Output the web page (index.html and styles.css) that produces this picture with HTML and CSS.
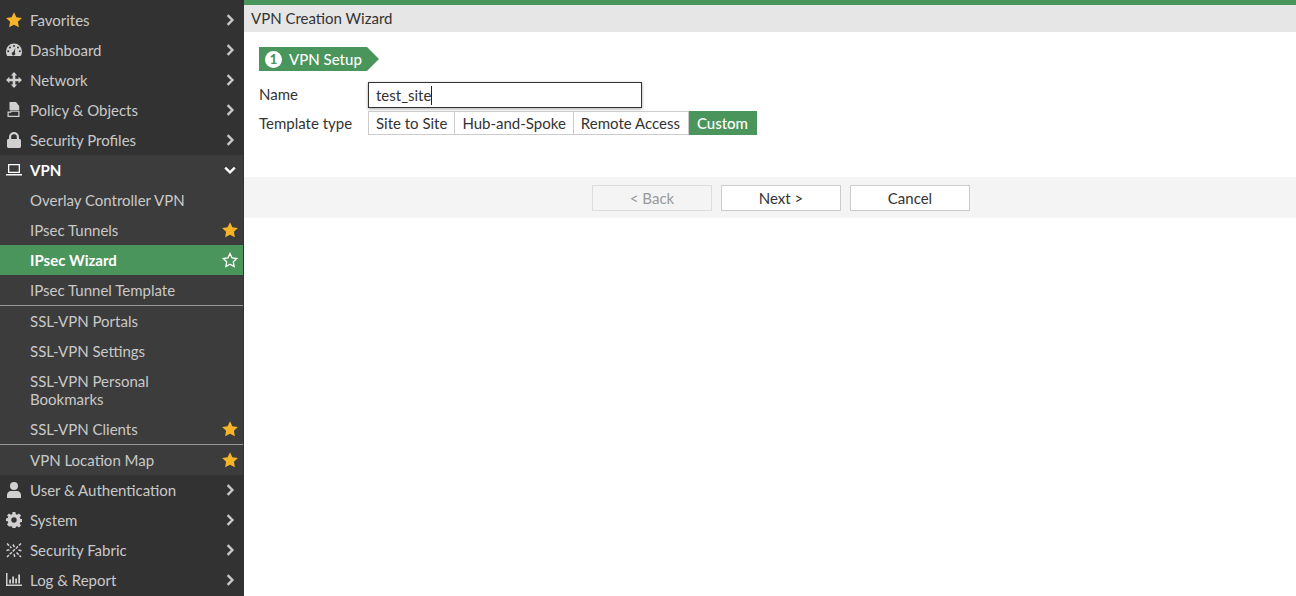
FILE: index.html
```html
<!DOCTYPE html>
<html lang="en">
<head>
<meta charset="utf-8">
<title>VPN Creation Wizard</title>
<link rel="stylesheet" href="styles.css">
</head>
<body>
<svg class="defs" width="0" height="0" aria-hidden="true">
  <defs>
    <symbol id="star" viewBox="0 0 16 16"><path d="M8 .2l2.400 5 5.500.8-4 3.800 1 5.500L8 12.700l-4.900 2.600 1-5.500-4-3.800 5.500-.8z"/></symbol>
    <symbol id="chev" viewBox="0 0 10 12"><path d="M2.600 1.200L7.400 6l-4.800 4.800" fill="none" stroke="currentColor" stroke-width="2.400"/></symbol>
  </defs>
</svg>
<div class="app">
  <nav class="side">
    <div class="item">
      <svg class="ico gold" viewBox="0 0 16 16"><use href="#star"/></svg><span class="lbl">Favorites</span>
      <svg class="chev" viewBox="0 0 10 12"><use href="#chev"/></svg>
    </div>
    <div class="item">
      <svg class="ico" viewBox="0 0 16 16"><path fill-rule="evenodd" d="M8 1.500a8 8 0 0 1 8 8c0 1.900-.5 3.400-1.300 4.500H1.300C.5 12.900 0 11.400 0 9.500a8 8 0 0 1 8-8zM8 3a1 1 0 1 0 0 2 1 1 0 0 0 0-2zM4 4.600a1 1 0 1 0 0 2 1 1 0 0 0 0-2zm8 0a1 1 0 1 0 0 2 1 1 0 0 0 0-2zM2.200 8.300a1 1 0 1 0 0 2 1 1 0 0 0 0-2zm11.600 0a1 1 0 1 0 0 2 1 1 0 0 0 0-2zM9.400 6L7.200 10a1.700 1.700 0 1 0 1.600.6z"/></svg><span class="lbl">Dashboard</span>
      <svg class="chev" viewBox="0 0 10 12"><use href="#chev"/></svg>
    </div>
    <div class="item">
      <svg class="ico" viewBox="0 0 16 16"><path d="M8 0l3.200 3.400H9.300v3.300h3.300V4.800L16 8l-3.400 3.200V9.300H9.300v3.300h1.900L8 16l-3.200-3.400h1.900V9.300H3.400v1.900L0 8l3.400-3.200v1.900h3.300V3.400H4.800z"/></svg><span class="lbl">Network</span>
      <svg class="chev" viewBox="0 0 10 12"><use href="#chev"/></svg>
    </div>
    <div class="item">
      <svg class="ico" viewBox="0 0 16 16"><path d="M3.500 0h6.500l3.200 4v4H3.500z"/><path d="M1.500 9.500h2.800v-1h8.200c.7 0 1 .4 1 1v5.500h-12zm1.200 1.200v3.100h9.600v-4h-7v.9z"/></svg><span class="lbl">Policy &amp; Objects</span>
      <svg class="chev" viewBox="0 0 10 12"><use href="#chev"/></svg>
    </div>
    <div class="item">
      <svg class="ico" viewBox="0 0 16 16"><path fill-rule="evenodd" d="M8 0a5 5 0 0 1 5 5v2h.5c.8 0 1.500.6 1.500 1.400v6.200c0 .8-.7 1.400-1.500 1.400h-11C1.700 16 1 15.400 1 14.600V8.400C1 7.600 1.700 7 2.500 7H3V5a5 5 0 0 1 5-5zm0 2.200A2.800 2.800 0 0 0 5.200 5v2h5.600V5A2.800 2.800 0 0 0 8 2.200z"/></svg><span class="lbl">Security Profiles</span>
      <svg class="chev" viewBox="0 0 10 12"><use href="#chev"/></svg>
    </div>

    <div class="group">
      <div class="item open">
        <svg class="ico" viewBox="0 0 16 16"><path fill-rule="evenodd" d="M2 2h12v9H2zm1.300 1.300v6.400h9.400V3.300z"/><path d="M0 12h16v1.500H0z"/></svg><span class="lbl">VPN</span>
        <svg class="chev down" viewBox="0 0 10 12"><use href="#chev"/></svg>
      </div>
      <div class="item sub"><span class="lbl">Overlay Controller VPN</span></div>
      <div class="item sub"><span class="lbl">IPsec Tunnels</span><svg class="fav gold" viewBox="0 0 16 16"><use href="#star"/></svg></div>
      <div class="item sub active"><span class="lbl">IPsec Wizard</span>
        <svg class="fav" viewBox="0 0 16 16"><path d="M8 1.500l2 4.300 4.700.7-3.400 3.300.8 4.700L8 12.200l-4.100 2.300.8-4.700-3.400-3.300 4.700-.7z" fill="none" stroke="#fff" stroke-width="1.300"/></svg>
      </div>
      <div class="item sub"><span class="lbl">IPsec Tunnel Template</span></div>
      <div class="sep"></div>
      <div class="item sub"><span class="lbl">SSL-VPN Portals</span></div>
      <div class="item sub"><span class="lbl">SSL-VPN Settings</span></div>
      <div class="item sub tall"><span class="lbl">SSL-VPN Personal Bookmarks</span></div>
      <div class="item sub"><span class="lbl">SSL-VPN Clients</span><svg class="fav gold" viewBox="0 0 16 16"><use href="#star"/></svg></div>
      <div class="sep"></div>
      <div class="item sub"><span class="lbl">VPN Location Map</span><svg class="fav gold" viewBox="0 0 16 16"><use href="#star"/></svg></div>
    </div>

    <div class="item">
      <svg class="ico" viewBox="0 0 16 16"><circle cx="8" cy="4" r="4"/><path d="M1 16v-3c0-2.300 1.700-4 4-4h6c2.300 0 4 1.700 4 4v3z"/></svg><span class="lbl">User &amp; Authentication</span>
      <svg class="chev" viewBox="0 0 10 12"><use href="#chev"/></svg>
    </div>
    <div class="item">
      <svg class="ico" viewBox="0 0 16 16"><path fill-rule="evenodd" d="M6.600 0h2.800l.4 2.200 1.300.6L13 1.500l2 2-1.300 1.900.6 1.300 2.200.4v2.800l-2.200.4-.6 1.300 1.300 1.900-2 2-1.900-1.300-1.300.6-.4 2.200H6.600l-.4-2.200-1.300-.6L3 14.500l-2-2 1.300-1.900-.6-1.300L-.5 9V6.500l2.200-.4.6-1.300L1 3.500l2-2 1.900 1.300 1.300-.6zM8 5.300a2.700 2.700 0 1 0 0 5.400 2.700 2.700 0 0 0 0-5.400z"/></svg><span class="lbl">System</span>
      <svg class="chev" viewBox="0 0 10 12"><use href="#chev"/></svg>
    </div>
    <div class="item">
      <svg class="ico" viewBox="0 0 16 16"><path d="M1 1.500l4.500 4.500M10.500 10.500l4.500 4.500M15 1.500L1 15M7 2.500l1.500 2.500M.5 8.500l3-.8M12.500 8l3 .8M8 12l.8 3" fill="none" stroke="currentColor" stroke-width="1.500" stroke-dasharray="3 1.200"/></svg><span class="lbl">Security Fabric</span>
      <svg class="chev" viewBox="0 0 10 12"><use href="#chev"/></svg>
    </div>
    <div class="item">
      <svg class="ico" viewBox="0 0 16 16"><path d="M0 1h1.500v11.500H16V14H0z"/><path d="M3.200 7.500h1.800v4H3.200zM6.200 4.500h1.800v7H6.200zM9.200 6.500h1.800v5H9.200zM12.200 2.500h1.800v9h-1.800z"/></svg><span class="lbl">Log &amp; Report</span>
      <svg class="chev" viewBox="0 0 10 12"><use href="#chev"/></svg>
    </div>
  </nav>

  <main class="main">
    <div class="topbar"></div>
    <header class="title">VPN Creation Wizard</header>
    <section class="form">
      <div class="step"><span class="num">1</span><span>VPN Setup</span></div>
      <div class="row name-row">
        <label class="field name-label">Name</label>
        <div class="input"><span class="value">test_site</span></div>
      </div>
      <div class="row type-row">
        <label class="field">Template type</label>
        <div class="seg">
          <span class="opt">Site to Site</span>
          <span class="opt">Hub-and-Spoke</span>
          <span class="opt wide">Remote Access</span>
          <span class="opt on">Custom</span>
        </div>
      </div>
    </section>
    <footer class="actions">
      <button class="btn" disabled>&lt; Back</button>
      <button class="btn">Next &gt;</button>
      <button class="btn">Cancel</button>
    </footer>
  </main>
</div>
</body>
</html>
```
FILE: styles.css
```css
* { box-sizing: border-box; }
html, body { margin: 0; height: 100%; overflow: hidden; }
body { font: 15px/18px Lato, "Liberation Sans", sans-serif; color: #333; background: #fff; }
.defs { position: absolute; }
.app { display: flex; height: 596px; }

.side { flex: 0 0 244px; width: 244px; background: #323232; color: #c9c9c9; padding-top: 5px; border-right: 1px solid #323232; }
.group { background: #3c3c3c; }
.item { display: flex; align-items: center; height: 30px; padding: 0 6px; }
.item .lbl { flex: 1; margin-left: 8px; }
.ico { width: 16px; height: 16px; fill: #d0d0d0; color: #d0d0d0; flex: none; }
.gold { fill: #f6b426 !important; }
.chev { width: 10px; height: 12px; color: #c9c9c9; margin-right: 2px; flex: none; }
.chev.down { transform: rotate(90deg); color: #fff; }
.open { color: #fff; font-weight: 700; }
.open .ico { fill: #fff; }
.sub { padding-left: 30px; padding-right: 5px; }
.sub .lbl { margin-left: 0; }
.tall { height: 48px; }
.tall .lbl { padding-right: 60px; }
.fav { width: 16px; height: 16px; flex: none; fill: none; }
.active { background: #4a955b; color: #fff; font-weight: 700; }
.sep { height: 1px; background: #9a9a9a; }

.main { flex: 1; display: flex; flex-direction: column; min-width: 0; }
.topbar { height: 5px; background: #4a955b; }
.title { height: 27px; background: #e6e6e6; padding: 4px 7px 0; }
.form { height: 145px; padding: 15px 15px 0; }

.step { display: flex; align-items: center; width: 120px; height: 24px; padding-left: 6px; color: #fff; font-weight: 500; background: #4a955b; clip-path: polygon(0 0, 108px 0, 120px 12px, 108px 24px, 0 24px); }
.num { width: 17px; height: 17px; border-radius: 50%; background: #fff; color: #4a955b; font-weight: 900; font-size: 13px; line-height: 17px; text-align: center; margin-right: 7px; }

.row { display: flex; align-items: center; }
.name-row { margin-top: 11px; }
.type-row { margin-top: 3px; }
.field { flex: 0 0 109px; }
.name-label { margin-bottom: 2px; }
.input { width: 274px; height: 26px; border: 1px solid #333; padding: 3px 7px; box-shadow: 0 1px 3px rgba(0,0,0,.35); background: #fff; }
.value { display: inline-block; height: 19px; border-right: 1px solid #222; padding-right: 0; }

.seg { display: flex; height: 24px; border: 1px solid #ccc; border-right: 0; }
.opt { padding: 2px 7px 0; border-right: 1px solid #ccc; line-height: 19px; }
.opt.wide { padding-right: 8px; }
.opt.on { background: #4a955b; color: #fff; font-weight: 500; border: 0; margin: -1px 0; padding: 3px 8px 0; width: 68px; }

.actions { display: flex; justify-content: center; gap: 9px; height: 41px; background: #f4f4f4; padding-top: 8px; padding-left: 22px; }
.btn { width: 120px; height: 26px; padding: 0; border: 1px solid #ccc; background: #fff; color: #333; font: inherit; }
.btn:disabled { background: #f4f4f4; border-color: #dcdcdc; color: #999; }
```
